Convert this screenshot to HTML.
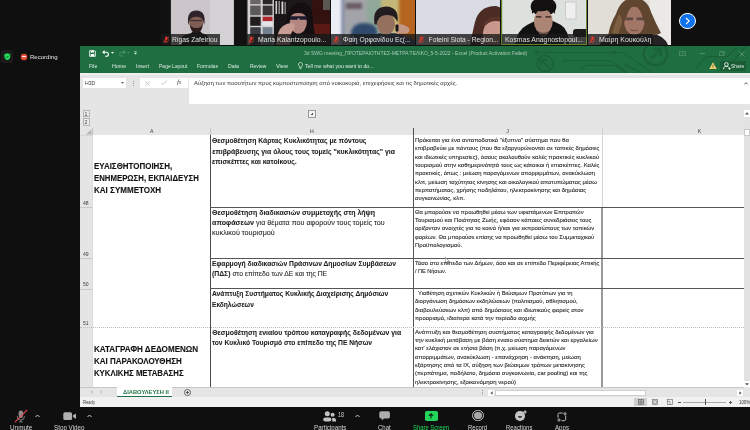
<!DOCTYPE html>
<html lang="el"><head><meta charset="utf-8"><title>Zoom Meeting</title>
<style>
html,body{margin:0;padding:0}
body{width:750px;height:430px;overflow:hidden;position:relative;background:#0f0f0f;font-family:"Liberation Sans",sans-serif}
div,svg,span{position:absolute;display:block}
.t{white-space:nowrap;transform-origin:0 50%;line-height:1;font-family:"Liberation Sans",sans-serif;color:#222}
.t b{position:static;display:inline;font-weight:bold}
.tt{font-size:5.2px;color:#a9c9b6}
.mn{font-size:5.3px;color:#dcebe1}
.dk{font-size:5.2px;color:#3a3a3a}
.hd{font-size:5.2px;color:#3c3c3c}
.fx{font-size:5.7px;color:#333}
.ca{font-size:8.6px;font-weight:bold;color:#111;-webkit-text-stroke:.12px #222}
.ch{font-size:6.9px;color:#1c1c1c;-webkit-text-stroke:.08px #333}
.cj{font-size:5.7px;color:#333}
.tab{font-size:6.1px;font-weight:bold;color:#217346}
.zl{font-size:6.1px;color:#e8e8e8}
.nm{font-size:6.7px;color:#e2e2e2}
.tb{font-size:6.3px;color:#d6d6d6}
.gr{font-size:6.3px;color:#23d959}
.fxs{font-family:"Liberation Serif",serif;font-size:7px;color:#444}
.fxs i{position:static;display:inline}
#xl{left:80px;top:46px;width:670px;height:360.7px;background:#e5e5e6;overflow:hidden}
#xl div{box-sizing:border-box}
.w{background:#fff}
.ln{background:#444}
.tile{top:0;height:45px;width:84px;overflow:hidden;background:#111}
.lab{left:0;top:34.3px;height:10.7px;background:rgba(26,26,26,.8)}
#tx{left:0;top:0;width:750px;height:430px;filter:blur(.3px)}
.cj{color:#1c1c1c;-webkit-text-stroke:.1px #333}
.n18{font-size:7px;color:#d0d0d0}
</style></head>
<body>
<!-- participant tiles -->
<div class="tile" style="left:161.3px;width:83.5px"><svg width="84" height="45" viewBox="0 0 84 45">
 <rect x="9.9" y="0" width="62.8" height="45" fill="#cbc5c9"/><rect x="49" y="0" width="23.7" height="45" fill="#d5d2d6"/>
 <g style="filter:blur(.7px)">
  <path d="M20 45 V38 Q22 34.5 30 33.2 L33 30 H38 L41 33.2 Q46 34.3 47.5 38 V45 Z" fill="#151314"/>
  <ellipse cx="35.3" cy="21.5" rx="7.2" ry="9.8" fill="#7d5d54"/>
  <path d="M27.4 25 Q25 10.5 35.3 10.5 Q45.6 10.5 43.2 25 Q42.6 16.5 35.3 16.8 Q28.2 16.5 27.4 25 Z" fill="#30232a"/>
  <path d="M28.8 24 Q29.5 33 35.3 33 Q41 33 41.8 24 Q40 28.5 35.3 28 Q30.6 28.5 28.8 24 Z" fill="#2a1c1c"/>
  <path d="M29.5 20.6 H41" stroke="#3a2a2a" stroke-width="1.1"/>
 </g></svg><div class="lab" style="width:58.4px"></div><svg style="left:1.6px;top:35.8px" width="6.6" height="7.5" viewBox="0 0 7 8"><rect x="2.4" y=".4" width="2.2" height="4.2" rx="1.1" fill="#e8392e"/><path d="M1.2 3.4 V4 A2.3 2.3 0 0 0 5.8 4 V3.4 M3.5 6.3 V7.5 M2.2 7.6 H4.8" fill="none" stroke="#e8392e" stroke-width=".7"/><path d="M.5 7.6 L6.5 .4" stroke="#e8392e" stroke-width=".9"/></svg></div>
<div class="tile" style="left:246.3px"><svg width="84" height="45" viewBox="0 0 84 45">
 <rect width="84" height="45" fill="#1d1819"/>
 <g style="filter:blur(.7px)">
  <rect x="1.5" y="0" width="26.4" height="45" fill="#d2d2d4"/>
  <rect x="4.2" y="0" width="10.5" height="4.2" fill="#6a6666"/><rect x="16.7" y="0" width="9.8" height="4.2" fill="#2a2626"/>
  <rect x="4.2" y="5.6" width="10.5" height="9.7" fill="#5c595b"/><rect x="16.7" y="5.6" width="9.8" height="9.7" fill="#3a3436"/>
  <rect x="4.2" y="16.7" width="10.5" height="9.1" fill="#221e20"/><rect x="16.7" y="16.7" width="9.8" height="4.6" fill="#b0272b"/><rect x="16.7" y="21.3" width="9.8" height="4.5" fill="#e4e4e8"/>
  <rect x="4.2" y="27.2" width="10.5" height="18" fill="#3b3b42"/><rect x="16.7" y="27.2" width="9.8" height="18" fill="#75808f"/>
  <rect x="28" y="0" width="14" height="45" fill="#1a1516"/>
  <rect x="29.5" y="1" width="1.6" height="13" fill="#cfcfcf"/><rect x="32.5" y="1" width="1.4" height="13" fill="#9a9a9a"/><rect x="35.5" y="1.5" width="1.8" height="12.5" fill="#d8d8d8"/><rect x="38.5" y="2" width="1.4" height="12" fill="#8a8a8a"/>
  <rect x="66" y="0" width="18" height="45" fill="#32110f"/><rect x="66" y="24" width="18" height="10" fill="#5a1915"/><rect x="77" y="0" width="7" height="10" fill="#5a5654"/>
  <path d="M38 45 Q38 15 46 6 Q52 1 59 3 Q67 7 67 22 Q68 34 72 45 Z" fill="#150f11"/>
  <ellipse cx="52.3" cy="22" rx="8.6" ry="11.5" fill="#b48680"/>
  <path d="M43.5 18 Q44 6 54 7 Q62 8 61.5 18 Q58 12.5 52 13 Q46 13 43.5 18 Z" fill="#150f11"/>
  <path d="M43.8 16.3 H61 V19.8 H53.6 V18.2 H51.6 V19.8 H43.8 Z" fill="#1c1a2c"/>
  <path d="M30 45 Q31 30 37 26 Q43 22 48 23.5 Q50 27 46.5 31 Q44 34 44 45 Z" fill="#c89c92"/>
 </g></svg><div class="lab" style="width:84px"></div><svg style="left:1.6px;top:35.8px" width="6.6" height="7.5" viewBox="0 0 7 8"><rect x="2.4" y=".4" width="2.2" height="4.2" rx="1.1" fill="#e8392e"/><path d="M1.2 3.4 V4 A2.3 2.3 0 0 0 5.8 4 V3.4 M3.5 6.3 V7.5 M2.2 7.6 H4.8" fill="none" stroke="#e8392e" stroke-width=".7"/><path d="M.5 7.6 L6.5 .4" stroke="#e8392e" stroke-width=".9"/></svg></div>
<div class="tile" style="left:331.3px"><svg width="84" height="45" viewBox="0 0 84 45">
 <rect width="84" height="45" fill="#9a9f9a"/>
 <g style="filter:blur(1.8px)">
  <rect x="-3" y="-3" width="14" height="51" fill="#eceef6"/><rect x="10" y="-3" width="4" height="51" fill="#5a6a9a" opacity=".5"/>
  <rect x="13" y="-3" width="24" height="51" fill="#a2a4aa"/><rect x="15" y="3" width="16" height="6" fill="#6a5a62"/>
  <rect x="36" y="-3" width="20" height="51" fill="#8fa89a"/><rect x="50" y="-3" width="20" height="51" fill="#c4b878"/>
  <rect x="68" y="-3" width="20" height="51" fill="#b5651f"/>
  <path d="M20 48 V32 Q22 23 33 23 Q44 23 46 30 V48 Z" fill="#2f4a6c"/>
 </g>
 <g style="filter:blur(.7px)">
  <path d="M36 45 Q38 36 48 33 H64 Q76 36 84 40 V45 Z" fill="#3d4d66"/>
  <ellipse cx="55" cy="24" rx="9" ry="11" fill="#94705f"/>
  <path d="M43.5 24 Q41 7 55 6.5 Q68.5 7 66.5 22 Q63 14 55 15 Q47 15 45.5 25 Z" fill="#231c20"/>
  <path d="M64.5 25 Q72 22.5 78 28 Q79.5 31 76 33.5 H66 Z" fill="#c49686"/>
  <rect x="64.5" y="24.5" width="3" height="7" rx="1" fill="#1a1618"/>
 </g></svg><div class="lab" style="width:84px"></div><svg style="left:1.6px;top:35.8px" width="6.6" height="7.5" viewBox="0 0 7 8"><rect x="2.4" y=".4" width="2.2" height="4.2" rx="1.1" fill="#e8392e"/><path d="M1.2 3.4 V4 A2.3 2.3 0 0 0 5.8 4 V3.4 M3.5 6.3 V7.5 M2.2 7.6 H4.8" fill="none" stroke="#e8392e" stroke-width=".7"/><path d="M.5 7.6 L6.5 .4" stroke="#e8392e" stroke-width=".9"/></svg></div>
<div class="tile" style="left:416.4px"><svg width="84" height="45" viewBox="0 0 84 45">
 <rect width="84" height="45" fill="#d9dce2"/>
 <g style="filter:blur(.7px)">
  <path d="M54 45 Q57 30 59 22 Q63 6 80 6 L86 8 V45 Z" fill="#4b2b23"/>
  <path d="M67 45 Q65 28 72 22 Q78 18 86 22 V45 Z" fill="#c9988c"/>
  <path d="M66 26 Q70 15 86 17 V22 Q76 19 70 25 Z" fill="#5a342a"/>
 </g></svg><div class="lab" style="width:84px"></div><svg style="left:1.6px;top:35.8px" width="6.6" height="7.5" viewBox="0 0 7 8"><rect x="2.4" y=".4" width="2.2" height="4.2" rx="1.1" fill="#e8392e"/><path d="M1.2 3.4 V4 A2.3 2.3 0 0 0 5.8 4 V3.4 M3.5 6.3 V7.5 M2.2 7.6 H4.8" fill="none" stroke="#e8392e" stroke-width=".7"/><path d="M.5 7.6 L6.5 .4" stroke="#e8392e" stroke-width=".9"/></svg></div>
<div class="tile" style="left:500.9px;width:86.3px"><svg width="87" height="45" viewBox="0 0 87 45">
 <rect width="87" height="45" fill="#dde1de"/>
 <g style="filter:blur(.7px)">
  <rect x="64.5" y="2" width="10.5" height="17" fill="#efefef" stroke="#c4c4c2" stroke-width=".8"/>
  <rect x="72" y="29" width="16" height="8" rx="3" fill="#1d1a1a"/>
  <path d="M14 45 Q16 30 26 25 L34 21 H52 L60 25 Q68 30 68 45 Z" fill="#121112"/>
  <ellipse cx="42.5" cy="6.5" rx="12.8" ry="9.5" fill="#141112"/>
  <ellipse cx="42.3" cy="21.5" rx="9.4" ry="12.3" fill="#ac8576"/>
  <path d="M31 14 Q30 4 42.5 4 Q55 4 54 14 Q51 9.5 47 9.8 Q41 12.5 36 10.5 Q32.5 11 31 14 Z" fill="#141112"/>
  <path d="M35 16.8 H40.5 M44.5 16.8 H50" stroke="#2a1c1a" stroke-width="1.3"/>
  <path d="M37 31 Q42.3 34.5 48 31 Q46 37 42.3 37 Q39 37 37 31 Z" fill="#6a4e46"/>
 </g>
 <rect x=".6" y="-2" width="85.1" height="46.4" fill="none" stroke="#62822a" stroke-width="1.2"/>
 </svg><div class="lab" style="left:1px;width:84.3px;height:10.2px"></div></div>
<div class="tile" style="left:587.7px;width:83.7px"><svg width="84" height="45" viewBox="0 0 84 45">
 <rect width="84" height="45" fill="#e1ddd7"/><rect x="62" width="22" height="45" fill="#ebe9e5"/>
 <g style="filter:blur(.7px)">
  <path d="M12 45 Q14 36 26 33 H62 Q76 35 80 45 Z" fill="#262223"/>
  <path d="M20 36 Q22 24 28 14 Q33 -2 46 -2 Q59 -2 63 12 Q68 24 73 33 Q66 37 60 34 H30 Q24 37 20 36 Z" fill="#60452f"/>
  <path d="M24 33 Q27 22 31 14 L35 20 Q32 30 30 34 Z" fill="#7c5e40"/>
  <ellipse cx="46.3" cy="21" rx="10.2" ry="14.2" fill="#a27666"/>
  <path d="M34 24 Q34 8 46 4 Q40 10 38.5 17 Q37 22 34 24 Z" fill="#60452f"/>
  <path d="M58.5 24 Q59 8 46 4 Q53 10 54.5 17 Q55.5 22 58.5 24 Z" fill="#60452f"/>
  <path d="M38 17.5 H45 V20.3 H38 Z M48.5 17.5 H55.5 V20.3 H48.5 Z" fill="#4a3a3a" opacity=".75"/>
  <path d="M42.5 30 Q46.3 31.5 50 30" stroke="#7a4a44" stroke-width="1.2" fill="none"/>
 </g></svg><div class="lab" style="width:65.6px"></div><svg style="left:1.6px;top:35.8px" width="6.6" height="7.5" viewBox="0 0 7 8"><rect x="2.4" y=".4" width="2.2" height="4.2" rx="1.1" fill="#e8392e"/><path d="M1.2 3.4 V4 A2.3 2.3 0 0 0 5.8 4 V3.4 M3.5 6.3 V7.5 M2.2 7.6 H4.8" fill="none" stroke="#e8392e" stroke-width=".7"/><path d="M.5 7.6 L6.5 .4" stroke="#e8392e" stroke-width=".9"/></svg></div>
<!-- next button -->
<div style="left:678.8px;top:12.6px;width:14.8px;height:14.8px;border-radius:50%;background:#0e72ed;border:1px solid #fff"></div>
<svg style="left:683px;top:16px" width="9" height="10" viewBox="0 0 9 10"><path d="M3 2 L6.2 5 L3 8" fill="none" stroke="#fff" stroke-width="1.1"/></svg>
<!-- shield + recording -->
<div style="left:1.2px;top:50.4px;width:12.3px;height:12.3px;border-radius:2px;background:#1a1a1a"></div>
<svg style="left:4.1px;top:53px" width="6.6" height="7.4" viewBox="0 0 8 9"><path d="M4 0.3 L7.6 1.6 V4.3 C7.6 6.6 6 8 4 8.8 C2 8 0.4 6.6 0.4 4.3 V1.6 Z" fill="#23d959"/><path d="M2.4 4.4 L3.6 5.6 L5.7 3.3" fill="none" stroke="#0f3d1f" stroke-width="1"/></svg>
<div style="left:20.8px;top:53.5px;width:6.4px;height:6.4px;border-radius:50%;background:#e9523c;box-shadow:0 0 1.5px #e9523c"></div>
<div style="left:22.2px;top:56.1px;width:3.6px;height:1.2px;background:#fff;border-radius:.5px"></div>

<!-- EXCEL -->
<div id="xl">
 <div style="left:0;top:0;width:670px;height:27px;background:#1f6e41"></div>
 <div style="left:0;top:27px;width:670px;height:2px;background:#efefef"></div>
 <!-- circuit decoration -->
 <svg style="left:430px;top:0" width="240" height="27" viewBox="0 0 240 27" fill="none" stroke="#1a6139" stroke-width="1.2">
  <circle cx="26.7" cy="6.5" r="1.3"/><path d="M28 6.5 H102.8"/><circle cx="104.1" cy="6.5" r="1.3"/><path d="M105.4 6.5 H113 L143 27"/>
  <circle cx="55.1" cy="14.6" r="1.3"/><path d="M56.4 14.6 H100.3 L118 27"/>
  <path d="M71.5 22.5 L76.8 19.3 H104.6 L116 27"/><circle cx="116.3" cy="19.3" r="1.2"/><path d="M117.4 19.9 L132 27"/>
  <circle cx="35.3" cy="17.6" r="8" stroke-width="1.5"/><path d="M39 21.5 L31.5 14 M31.3 19.5 V13.8 H37" stroke-width="1.5"/>
  <circle cx="145.5" cy="7.6" r="11.7" stroke-width="2.2"/><path d="M141 12.5 L150.5 3 M143.5 2.6 H150.9 V10" stroke-width="2.2"/>
  <path d="M186 22.6 L196.2 10.6 H217.2 L228 1" stroke-width="1.2"/><path d="M217.2 22.6 L231.6 5.2 L236 0" stroke-width="1.2"/>
 </svg>
 <!-- QAT -->
 <svg style="left:9px;top:3.6px" width="7" height="7" viewBox="0 0 7 7"><path d="M0.7 0.7 H5.6 L6.3 1.4 V6.3 H0.7 Z" fill="none" stroke="#fff" stroke-width=".9"/><rect x="1.9" y="0.9" width="3" height="1.7" fill="#fff"/><rect x="1.8" y="4" width="3.4" height="2.2" fill="#fff"/></svg>
 <svg style="left:22px;top:3.8px" width="8" height="7" viewBox="0 0 8 7"><path d="M1 2.2 H4.4 A2 2 0 0 1 4.4 6.2 H3.2" fill="none" stroke="#fff" stroke-width="1.1"/><path d="M0.2 2.2 L2.6 0 V4.4 Z" fill="#fff"/></svg>
 <svg style="left:31px;top:5.6px" width="3" height="2" viewBox="0 0 3 2"><path d="M0 0 H3 L1.5 1.8 Z" fill="#fff"/></svg>
 <svg style="left:37.6px;top:3.8px" width="8" height="7" viewBox="0 0 8 7" opacity=".55"><path d="M7 2.2 H3.6 A2 2 0 0 0 3.6 6.2 H4.8" fill="none" stroke="#6fb08a" stroke-width="1"/><path d="M7.8 2.2 L5.4 0 V4.4 Z" fill="#6fb08a"/></svg>
 <svg style="left:46.5px;top:5.6px" width="3" height="2" viewBox="0 0 3 2" opacity=".5"><path d="M0 0 H3 L1.5 1.8 Z" fill="#6fb08a"/></svg>
 <svg style="left:54px;top:4.8px" width="3" height="4" viewBox="0 0 3 4"><path d="M0.3 0.4 H2.7" stroke="#dfe" stroke-width=".6"/><path d="M0 1.8 H3 L1.5 3.6 Z" fill="#dfe"/></svg>
 <!-- lightbulb -->
 <svg style="left:217.5px;top:15.6px" width="5" height="8" viewBox="0 0 5 8"><path d="M2.5 0.5 A2 2 0 0 1 3.6 4.2 V5.4 H1.4 V4.2 A2 2 0 0 1 2.5 0.5 Z M1.6 6.6 H3.4" fill="none" stroke="#e4efe8" stroke-width=".7"/></svg>
 <!-- window controls -->
 <svg style="left:598.6px;top:4.8px" width="7" height="5" viewBox="0 0 7 5"><rect x=".4" y=".4" width="6.2" height="4.2" fill="none" stroke="#4f8d69" stroke-width=".8"/><path d="M3.5 3.6 V1.6 M2.5 2.5 L3.5 1.5 L4.5 2.5" stroke="#4f8d69" stroke-width=".7" fill="none"/></svg>
 <div style="left:619.5px;top:6.8px;width:5px;height:.9px;background:#4f8d69"></div>
 <svg style="left:639.3px;top:4.6px" width="6" height="5" viewBox="0 0 6 5"><rect x=".4" y="1" width="4.2" height="3.6" fill="none" stroke="#4f8d69" stroke-width=".8"/><path d="M1.4 1 V.4 H5.6 V3.8 H4.8" fill="none" stroke="#4f8d69" stroke-width=".7"/></svg>
 <svg style="left:659.3px;top:4.5px" width="6" height="6" viewBox="0 0 6 6"><path d="M.5 .5 L5.5 5.5 M5.5 .5 L.5 5.5" stroke="#5a9773" stroke-width=".9"/></svg>
 <!-- warning + share -->
 <svg style="left:628.6px;top:16px" width="8" height="7.4" viewBox="0 0 8 7.4"><path d="M4 .3 L7.8 7.1 H.2 Z" fill="#f3cf78"/><path d="M4 2.6 V4.8 M4 5.5 V6.3" stroke="#5a4a10" stroke-width=".8"/></svg>
 <div style="left:640.3px;top:15px;width:26.2px;height:10px;background:#1a5c36"></div>
 <svg style="left:642.6px;top:16.2px" width="8" height="8" viewBox="0 0 8 8" fill="none" stroke="#fff" stroke-width=".8"><circle cx="3.4" cy="2.4" r="1.8"/><path d="M.4 7.4 C.4 5.2 1.8 4.4 3.4 4.4 C4.4 4.4 5.2 4.7 5.7 5.2"/><path d="M5.2 6.6 H7.8 M6.5 5.3 V7.9" stroke-width=".7"/></svg>
 <!-- formula bar -->
 <div class="w" style="left:2.7px;top:32px;width:43.6px;height:9.8px"></div>
 <svg style="left:40.8px;top:36.2px" width="3" height="2" viewBox="0 0 3 2"><path d="M0 0 H3 L1.5 1.7 Z" fill="#555"/></svg>
 <div style="left:52.9px;top:34.6px;width:.8px;height:.8px;background:#999;box-shadow:0 1.9px #999,0 3.8px #999"></div>
 <div class="w" style="left:59.6px;top:32px;width:48px;height:9.9px"></div>
 <svg style="left:65px;top:34.5px" width="5" height="5" viewBox="0 0 5 5"><path d="M.3 .3 L4.7 4.7 M4.7 .3 L.3 4.7" stroke="#b0b0b0" stroke-width=".7"/></svg>
 <svg style="left:80.6px;top:34.4px" width="6" height="5" viewBox="0 0 6 5"><path d="M.3 2.8 L2 4.5 L5.7 .4" fill="none" stroke="#b0b0b0" stroke-width=".75"/></svg>
 <div class="w" style="left:109px;top:32px;width:561px;height:26.2px"></div>
 <svg style="left:664px;top:35.6px" width="4" height="3" viewBox="0 0 4 3"><path d="M.3 2.4 L2 .7 L3.7 2.4" fill="none" stroke="#444" stroke-width=".9"/></svg>
 <!-- outline buttons -->
 <div style="left:2.7px;top:64px;width:7px;height:7.4px;border:.6px solid #b5b5b5;background:#ececec"></div>
 <div style="left:2.7px;top:72.3px;width:7px;height:7.4px;border:.6px solid #b5b5b5;background:#ececec"></div>
 <div style="left:228px;top:64px;width:8px;height:7.8px;border:.6px solid #9a9a9a;background:#f3f3f3"></div>
 <div style="left:230.8px;top:67.55px;width:2.4px;height:.7px;background:#555"></div><div style="left:231.65px;top:66.7px;width:.7px;height:2.4px;background:#555"></div>
 <!-- header separators -->
 <svg style="left:3.5px;top:83px" width="8" height="6" viewBox="0 0 8 6"><path d="M7.5 .5 V5.5 H1.5 Z" fill="#b8b8b8"/></svg>
 <div style="left:12px;top:82px;width:.8px;height:7px;background:#c4c4c4"></div>
 <div style="left:130.3px;top:82px;width:.8px;height:7px;background:#c4c4c4"></div>
 <div style="left:332.6px;top:82px;width:.8px;height:7px;background:#999"></div>
 <div style="left:522.3px;top:82px;width:.8px;height:7px;background:#c4c4c4"></div>
 <div style="left:0;top:88.7px;width:664px;height:.7px;background:#d6d6d6"></div>
 <!-- sheet -->
 <div class="w" style="left:12.5px;top:89.1px;width:651px;height:251.9px"></div>
 <div style="left:12px;top:89px;width:.7px;height:252px;background:#dcdcdc"></div>
 <!-- row header separators -->
 <div style="left:0;top:161px;width:12.3px;height:.8px;background:#c8c8c8"></div>
 <div style="left:0;top:212.2px;width:12.3px;height:.8px;background:#c8c8c8"></div>
 <div style="left:0;top:242.5px;width:12.3px;height:.8px;background:#c8c8c8"></div>
 <!-- grid -->
 <div class="ln" style="left:129.9px;top:88.7px;width:1px;height:252.3px;background:#4a4a4a"></div>
 <div class="ln" style="left:333.15px;top:82px;width:1px;height:259px;background:#555"></div>
 <div style="left:521.5px;top:82px;width:.8px;height:79px;background:#d4d4d4"></div>
 <div class="ln" style="left:521.05px;top:161px;width:1.7px;height:180px;background:#999"></div>
 <div class="ln" style="left:130px;top:160.9px;width:533.5px;height:1px;background:#555"></div>
 <div class="ln" style="left:130px;top:211.8px;width:533.5px;height:1px;background:#555"></div>
 <div class="ln" style="left:130px;top:241.9px;width:533.5px;height:1px;background:#555"></div>
 <div style="left:0;top:280.6px;width:663.5px;height:0;border-top:.8px dotted #bdbdbd"></div>
 <!-- vertical scrollbar -->
 <div style="left:663.5px;top:64px;width:6.5px;height:277px;background:#e2e2e3"></div>
 <div class="w" style="left:664px;top:64px;width:6px;height:6.6px"></div>
 <svg style="left:665.2px;top:66px" width="4" height="3" viewBox="0 0 4 3"><path d="M0 2.6 H4 L2 .3 Z" fill="#555"/></svg>
 <div class="w" style="left:664px;top:83.3px;width:6px;height:6.6px;border:.5px solid #c8c8c8"></div>
 <div class="w" style="left:664px;top:334.6px;width:6px;height:6.4px"></div>
 <svg style="left:665.2px;top:336.8px" width="4" height="3" viewBox="0 0 4 3"><path d="M0 .3 H4 L2 2.6 Z" fill="#555"/></svg>
 <!-- tab row -->
 <div style="left:0;top:341px;width:670px;height:10.4px;background:#e5e5e6"></div>
 <div style="left:0;top:341px;width:663.5px;height:.7px;background:#c6c6c6"></div>
 <svg style="left:9.6px;top:344.4px" width="3" height="4" viewBox="0 0 3 4"><path d="M2.6 .2 V3.8 L.4 2 Z" fill="#c2c2c2"/></svg>
 <svg style="left:19.6px;top:344.4px" width="3" height="4" viewBox="0 0 3 4"><path d="M.4 .2 V3.8 L2.6 2 Z" fill="#c2c2c2"/></svg>
 <div class="w" style="left:36.9px;top:341px;width:55.4px;height:10px;border-bottom:1.1px solid #217346"></div>
 <div style="left:104.2px;top:343px;width:6.6px;height:6.6px;border-radius:50%;border:.7px solid #666"></div>
 <div style="left:106px;top:346px;width:3px;height:.7px;background:#555"></div><div style="left:107.15px;top:344.85px;width:.7px;height:3px;background:#555"></div>
 <!-- horizontal scrollbar -->
 <div style="left:402.3px;top:343.8px;width:.8px;height:.8px;background:#999;box-shadow:0 1.9px #999,0 3.8px #999"></div>
 <div class="w" style="left:407.6px;top:343.6px;width:6.4px;height:6px"></div>
 <svg style="left:409.6px;top:344.9px" width="3" height="4" viewBox="0 0 3 4"><path d="M2.6 .2 V3.8 L.4 2 Z" fill="#555"/></svg>
 <div class="w" style="left:415.2px;top:343.6px;width:151.3px;height:6px;border:.5px solid #d0d0d0"></div>
 <div class="w" style="left:656.6px;top:343.6px;width:6.6px;height:6px"></div>
 <svg style="left:658.6px;top:344.9px" width="3" height="4" viewBox="0 0 3 4"><path d="M.4 .2 V3.8 L2.6 2 Z" fill="#555"/></svg>
 <!-- status bar -->
 <div style="left:0;top:351.4px;width:670px;height:9.3px;background:#f1f1f1"></div>
 <div style="left:554px;top:351.8px;width:13.3px;height:8.6px;background:#cfcfcf"></div>
 <svg style="left:557.7px;top:353.4px" width="6" height="6" viewBox="0 0 6 6" fill="none" stroke="#666" stroke-width=".7"><rect x=".4" y=".4" width="5.2" height="5.2"/><path d="M.4 2.2 H5.6 M.4 3.9 H5.6 M3 .4 V5.6"/></svg>
 <svg style="left:572.3px;top:353.4px" width="6" height="6" viewBox="0 0 6 6" fill="none" stroke="#777" stroke-width=".7"><rect x=".4" y=".4" width="5.2" height="5.2"/><rect x="1.7" y="1.8" width="2.6" height="2.4"/></svg>
 <svg style="left:586.5px;top:353.4px" width="6" height="6" viewBox="0 0 6 6" fill="none" stroke="#777" stroke-width=".7"><rect x=".4" y=".4" width="5.2" height="5.2"/><path d="M.4 2.4 H3 V5.6"/></svg>
 <div style="left:598.4px;top:355.9px;width:3px;height:.8px;background:#555"></div>
 <div style="left:603.3px;top:356px;width:43.2px;height:.6px;background:#a8a8a8"></div>
 <div style="left:624.5px;top:353.4px;width:1.5px;height:5.6px;background:#555"></div>
 <div style="left:648.8px;top:355.9px;width:3.4px;height:.8px;background:#555"></div><div style="left:650.1px;top:354.6px;width:.8px;height:3.4px;background:#555"></div>
</div>
<!-- zoom toolbar icons -->
<svg style="left:14px;top:408.5px" width="14" height="14" viewBox="0 0 14 14"><rect x="4.7" y="1.5" width="4.3" height="7.7" rx="2.1" fill="#8c8c8c"/><path d="M3.4 7 V7.6 A3.5 3.5 0 0 0 10.4 7.6 V7 M6.9 11.2 V12.8 M5.2 12.9 H8.6" fill="none" stroke="#8c8c8c" stroke-width=".9"/><path d="M1 13.2 L13 1" stroke="#e2494c" stroke-width="1.1"/></svg>
<svg style="left:35.3px;top:414px" width="5" height="4" viewBox="0 0 5 4"><path d="M.5 3 L2.5 1 L4.5 3" fill="none" stroke="#cfcfcf" stroke-width="1"/></svg>
<svg style="left:63px;top:411.5px" width="14" height="9" viewBox="0 0 14 9"><rect x=".3" y=".3" width="8.8" height="7.8" rx="1.7" fill="#b0b0b0"/><path d="M10 3.3 L13 1.4 V7 L10 5.1 Z" fill="#b0b0b0"/></svg>
<svg style="left:86.6px;top:414px" width="5" height="4" viewBox="0 0 5 4"><path d="M.5 3 L2.5 1 L4.5 3" fill="none" stroke="#cfcfcf" stroke-width="1"/></svg>
<svg style="left:323px;top:410.5px" width="14" height="11" viewBox="0 0 14 11" fill="#c2c2c2"><circle cx="4.3" cy="2.8" r="2.5"/><rect x=".2" y="6.5" width="8.2" height="4" rx="2"/><circle cx="9.6" cy="3.8" r="2"/><path d="M9.2 7 H11 A2 2 0 0 1 13 9 V10.5 H9.2 Z"/></svg>
<svg style="left:355px;top:414px" width="5" height="4" viewBox="0 0 5 4"><path d="M.5 3 L2.5 1 L4.5 3" fill="none" stroke="#cfcfcf" stroke-width="1"/></svg>
<svg style="left:379px;top:410.8px" width="12" height="10" viewBox="0 0 12 10"><path d="M2 .3 H9.2 A1.7 1.7 0 0 1 10.9 2 V5.8 A1.7 1.7 0 0 1 9.2 7.5 H5 L2.8 9.6 V7.5 H2 A1.7 1.7 0 0 1 .3 5.8 V2 A1.7 1.7 0 0 1 2 .3 Z" fill="#adadad"/></svg>
<div style="left:425px;top:410.9px;width:12.9px;height:10px;border-radius:1.8px;background:#22d45a"></div>
<svg style="left:428.3px;top:412.6px" width="6" height="6" viewBox="0 0 6 6"><path d="M3 5.4 V1.2 M.9 2.9 L3 .8 L5.1 2.9" fill="none" stroke="#06240f" stroke-width="1.1"/></svg>
<div style="left:472.4px;top:410.1px;width:11.2px;height:11.2px;box-sizing:border-box;border-radius:50%;border:.9px solid #c6c6c6"></div>
<div style="left:474.4px;top:412.1px;width:7.2px;height:7.2px;border-radius:50%;background:#a8a8a8"></div>
<div style="left:515.2px;top:411px;width:9.6px;height:9.6px;border-radius:50%;background:#c4c4c4"></div>
<div style="left:517.9px;top:415.6px;width:4.2px;height:2px;border-radius:0 0 2px 2px;background:#333"></div>
<svg style="left:522.6px;top:409.8px" width="4" height="4" viewBox="0 0 4 4"><path d="M2 .3 V3.7 M.3 2 H3.7" stroke="#f2f2f2" stroke-width=".9"/></svg>
<svg style="left:557px;top:411.5px" width="10" height="10" viewBox="0 0 10 10" fill="none" stroke="#cacaca" stroke-width=".9"><path d="M3.2 1 H5.8 M8.7 3.6 V7.2 A1.5 1.5 0 0 1 7.2 8.7 H4.4 M1 5.8 V2.5 A1.5 1.5 0 0 1 2.5 1 H3.4"/><circle cx="8" cy="1.8" r="1.1"/><circle cx="2" cy="8" r="1.1"/></svg>
<!-- mouse cursor -->
<svg style="left:445.3px;top:256.8px" width="5" height="8" viewBox="0 0 5 8"><path d="M.4 .4 V6.2 L1.8 4.9 L2.8 7.2 L3.7 6.8 L2.7 4.6 H4.6 Z" fill="#fff" stroke="#555" stroke-width=".5"/></svg>

<!-- text -->
<div id="tx">
<span class="t tt" style="left:304.0px;top:51px;transform:scaleX(0.966);">3d SWG meeting_ΠΡΟΤΕΡΑΙΟΤΗΤΕΣ-ΜΕΤΡΑ ΤΕΛΙΚΟ_5-5-2022 - Excel (Product Activation Failed)</span>
<span class="t mn" style="left:88.6px;top:64px;transform:scaleX(0.983);">File</span>
<span class="t mn" style="left:111.6px;top:64px;transform:scaleX(1.004);">Home</span>
<span class="t mn" style="left:135.7px;top:64px;transform:scaleX(0.989);">Insert</span>
<span class="t mn" style="left:158.7px;top:64px;transform:scaleX(0.948);">Page Layout</span>
<span class="t mn" style="left:197.0px;top:64px;transform:scaleX(0.947);">Formulas</span>
<span class="t mn" style="left:228.0px;top:64px;transform:scaleX(0.982);">Data</span>
<span class="t mn" style="left:249.5px;top:64px;transform:scaleX(0.938);">Review</span>
<span class="t mn" style="left:275.7px;top:64px;transform:scaleX(1.045);">View</span>
<span class="t mn" style="left:305.0px;top:64px;transform:scaleX(0.983);">Tell me what you want to do...</span>
<span class="t mn" style="left:730.8px;top:64px;transform:scaleX(0.933);">Share</span>
<span class="t fxs" style="left:176.9px;top:79.3745px;"><i>f</i><i style="font-size:.75em">x</i></span>
<span class="t dk" style="left:84.7px;top:81px;transform:scaleX(0.991);">H3D</span>
<span class="t fx" style="left:193.5px;top:81px;transform:scaleX(1.033);">Αύξηση των ποσοτήτων προς κομποστοποίηση από νοικοκυριά, επιχειρήσεις και τις δημοτικές αρχές.</span>
<span class="t hd" style="left:149.9px;top:129px;">A</span>
<span class="t hd" style="left:310.1px;top:129px;">H</span>
<span class="t hd" style="left:506.2px;top:129px;">J</span>
<span class="t hd" style="left:697.7px;top:129px;">K</span>
<span class="t hd" style="left:84.6px;top:112px;">1</span>
<span class="t hd" style="left:84.6px;top:120px;">2</span>
<span class="t hd" style="left:83.2px;top:201px;transform:scaleX(0.969);">48</span>
<span class="t hd" style="left:83.2px;top:252px;transform:scaleX(0.969);">49</span>
<span class="t hd" style="left:83.2px;top:282px;transform:scaleX(0.969);">50</span>
<span class="t hd" style="left:83.2px;top:321px;transform:scaleX(0.969);">51</span>
<span class="t ca" style="left:94.2px;top:162px;transform:scaleX(0.926);">ΕΥΑΙΣΘΗΤΟΠΟΙΗΣΗ,</span>
<span class="t ca" style="left:94.2px;top:174px;transform:scaleX(0.907);">ΕΝΗΜΕΡΩΣΗ, ΕΚΠΑΙΔΕΥΣΗ</span>
<span class="t ca" style="left:94.2px;top:186px;transform:scaleX(0.935);">ΚΑΙ ΣΥΜΜΕΤΟΧΗ</span>
<span class="t ca" style="left:94.2px;top:345px;transform:scaleX(0.940);">ΚΑΤΑΓΡΑΦΗ ΔΕΔΟΜΕΝΩΝ</span>
<span class="t ca" style="left:94.2px;top:357px;transform:scaleX(0.927);">ΚΑΙ ΠΑΡΑΚΟΛΟΥΘΗΣΗ</span>
<span class="t ca" style="left:94.2px;top:369px;transform:scaleX(0.906);">ΚΥΚΛΙΚΗΣ ΜΕΤΑΒΑΣΗΣ</span>
<span class="t ch" style="left:212.2px;top:138px;transform:scaleX(0.990);"><b>Θεσμοθέτηση Κάρτας Κυκλικότητας με πόντους</b></span>
<span class="t ch" style="left:212.2px;top:149px;"><b>επιβράβευσης για όλους τους τομείς "κυκλικότητας" για</b></span>
<span class="t ch" style="left:212.2px;top:159px;transform:scaleX(0.996);"><b>επισκέπτες και κατοίκους.</b></span>
<span class="t ch" style="left:212.2px;top:210px;transform:scaleX(1.010);"><b>Θεσμοθέτηση διαδικασιών συμμετοχής στη λήψη</b></span>
<span class="t ch" style="left:212.2px;top:220px;transform:scaleX(1.041);"><b>αποφάσεων</b> για θέματα που αφορούν τους τομείς του</span>
<span class="t ch" style="left:212.2px;top:230px;transform:scaleX(1.046);">κυκλικού τουρισμού</span>
<span class="t ch" style="left:212.2px;top:261px;transform:scaleX(0.977);"><b>Εφαρμογή διαδικασιών Πράσινων Δημοσίων Συμβάσεων</b></span>
<span class="t ch" style="left:212.2px;top:271px;transform:scaleX(0.991);"><b>(ΠΔΣ)</b> στο επίπεδο των ΔΕ και της ΠΕ</span>
<span class="t ch" style="left:212.2px;top:291px;transform:scaleX(0.969);"><b>Ανάπτυξη Συστήματος Κυκλικής Διαχείρισης Δημόσιων</b></span>
<span class="t ch" style="left:212.2px;top:302px;transform:scaleX(0.954);"><b>Εκδηλώσεων</b></span>
<span class="t ch" style="left:212.2px;top:330px;"><b>Θεσμοθέτηση ενιαίου τρόπου καταγραφής δεδομένων για</b></span>
<span class="t ch" style="left:212.2px;top:340px;transform:scaleX(0.969);"><b>τον Κυκλικό Τουρισμό στο επίπεδο της ΠΕ Νήσων</b></span>
<span class="t cj" style="left:414.8px;top:138px;transform:scaleX(1.053);">Πρόκειται για ένα ανταποδοτικό "έξυπνο" σύστημα που θα</span>
<span class="t cj" style="left:414.8px;top:146px;transform:scaleX(1.046);">επιβραβεύει με πόντους (που θα εξαργυρώνονται σε τοπικές δημόσιες</span>
<span class="t cj" style="left:414.8px;top:155px;transform:scaleX(1.041);">και ιδιωτικές υπηρεσίες), όσους ακολουθούν καλές πρακτικές κυκλικού</span>
<span class="t cj" style="left:414.8px;top:163px;transform:scaleX(1.048);">τουρισμού στην καθημερινότητά τους ως κάτοικοι ή επισκέπτες. Καλές</span>
<span class="t cj" style="left:414.8px;top:171px;transform:scaleX(1.020);">πρακτικές, όπως : μείωση παραγόμενων απορριμμάτων, ανακύκλωση</span>
<span class="t cj" style="left:414.8px;top:180px;transform:scaleX(1.045);">κλπ, μείωση ταχύτητας κίνησης και οικολογικού αποτυπώματος μέσω</span>
<span class="t cj" style="left:414.8px;top:188px;transform:scaleX(1.038);">περπατήματος, χρήσης ποδηλάτου, ηλεκτροκίνησης και δημόσιας</span>
<span class="t cj" style="left:414.8px;top:196px;transform:scaleX(1.030);">συγκοινωνίας, κλπ.</span>
<span class="t cj" style="left:414.8px;top:210px;transform:scaleX(1.030);">Θα μπορούσε να προωθηθεί μέσω των υφιστάμενων Επιτροπών</span>
<span class="t cj" style="left:414.8px;top:218px;transform:scaleX(1.048);">Τουρισμού και Ποιότητας Ζωής, εφόσον κάποιες συνεδριάσεις τους</span>
<span class="t cj" style="left:414.8px;top:226px;transform:scaleX(1.047);">ορίζονταν ανοιχτές για το κοινό ή/και για εκπροσώπους των τοπικών</span>
<span class="t cj" style="left:414.8px;top:235px;transform:scaleX(1.022);">φορέων. Θα μπορούσε επίσης να προωθηθεί μέσω του Συμμετοχικού</span>
<span class="t cj" style="left:414.8px;top:243px;transform:scaleX(1.045);">Προϋπολογισμού.</span>
<span class="t cj" style="left:414.8px;top:261px;transform:scaleX(1.035);">Τόσο στο επίπεδο των Δήμων, όσο και σε επίπεδο Περιφέρειας Αττικής</span>
<span class="t cj" style="left:414.8px;top:269px;transform:scaleX(0.966);">/ ΠΕ Νήσων.</span>
<span class="t cj" style="left:417.5px;top:291px;transform:scaleX(1.023);">Υιοθέτηση σχετικών Κυκλικών ή Βιώσιμων Προτύπων για τη</span>
<span class="t cj" style="left:414.8px;top:299px;transform:scaleX(1.044);">διοργάνωση δημόσιων εκδηλώσεων (πολιτισμού, αθλητισμού,</span>
<span class="t cj" style="left:414.8px;top:308px;transform:scaleX(1.056);">διαβουλεύσεων κλπ) από δημόσιους και ιδιωτικούς φορείς  στον</span>
<span class="t cj" style="left:414.8px;top:316px;transform:scaleX(1.040);">προορισμό, ιδιαίτερα κατά την περίοδο αιχμής</span>
<span class="t cj" style="left:414.8px;top:330px;transform:scaleX(1.045);">Ανάπτυξη και θεσμοθέτηση συστήματος καταγραφής δεδομένων για</span>
<span class="t cj" style="left:414.8px;top:338px;transform:scaleX(1.051);">την κυκλική μετάβαση με βάση ενιαίο σύστημα δεικτών και εργαλείων</span>
<span class="t cj" style="left:414.8px;top:346px;transform:scaleX(1.030);">κατ' ελάχιστον σε ετήσια βάση (π.χ. μείωση παραγόμενων</span>
<span class="t cj" style="left:414.8px;top:355px;transform:scaleX(1.035);">απορριμμάτων, ανακύκλωση - επανάχρηση - ανάκτηση, μείωση</span>
<span class="t cj" style="left:414.8px;top:363px;transform:scaleX(1.032);">εξάρτησης από τα ΙΧ, αύξηση των βιώσιμων τρόπων μετακίνησης</span>
<span class="t cj" style="left:414.8px;top:371px;transform:scaleX(1.033);">(περπάτημα, ποδήλατο, δημόσια συγκοινωνία, car pooling) και της</span>
<span class="t cj" style="left:414.8px;top:380px;transform:scaleX(1.059);">ηλεκτροκίνησης, εξοικονόμηση νερού)</span>
<span class="t tab" style="left:122.5px;top:389px;transform:scaleX(0.948);">ΔΙΑΒΟΥΛΕΥΣΗ ΙΙ</span>
<span class="t dk" style="left:83.0px;top:400px;transform:scaleX(0.800);">Ready</span>
<span class="t dk" style="left:738.6px;top:400px;transform:scaleX(0.843);">100%</span>
<span class="t zl" style="left:30.4px;top:54px;transform:scaleX(0.990);">Recording</span>
<span class="t nm" style="left:172.3px;top:37px;transform:scaleX(1.011);">Rigas Zafeiriou</span>
<span class="t nm" style="left:257.6px;top:37px;transform:scaleX(1.028);">Maria Kalantzopoulo...</span>
<span class="t nm" style="left:342.8px;top:37px;transform:scaleX(1.014);">Φαίη Ορφανίδου Ες(...</span>
<span class="t nm" style="left:428.6px;top:37px;">Foteini Siota - Region...</span>
<span class="t nm" style="left:504.6px;top:37px;transform:scaleX(1.027);">Kosmas Anagnostopoul...</span>
<span class="t nm" style="left:599.2px;top:37px;transform:scaleX(1.051);">Μαίρη Κουκούλη</span>
<span class="t tb" style="left:9.6px;top:425px;transform:scaleX(1.015);">Unmute</span>
<span class="t tb" style="left:54.0px;top:425px;transform:scaleX(0.993);">Stop Video</span>
<span class="t tb" style="left:313.6px;top:425px;transform:scaleX(0.985);">Participants</span>
<span class="t tb" style="left:378.4px;top:425px;transform:scaleX(0.962);">Chat</span>
<span class="t gr" style="left:412.8px;top:425px;transform:scaleX(0.935);">Share Screen</span>
<span class="t tb" style="left:468.0px;top:425px;transform:scaleX(0.945);">Record</span>
<span class="t tb" style="left:506.4px;top:425px;transform:scaleX(0.942);">Reactions</span>
<span class="t tb" style="left:554.7px;top:425px;transform:scaleX(0.982);">Apps</span>
<span class="t n18" style="left:338.3px;top:411px;transform:scaleX(0.770);">18</span>
</div>
</body></html>
